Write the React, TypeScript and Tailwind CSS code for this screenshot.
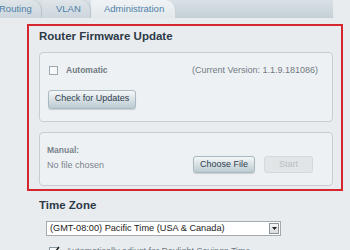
const font = { fontFamily: '"Liberation Sans", Arial, sans-serif' };

function Tab({ label, active, className }: { label: string; active?: boolean; className: string }) {
  return (
    <div
      className={
        "relative flex h-full items-center rounded-tr-[10px] border-r text-[9.5px] " +
        (active
          ? "bg-gradient-to-b from-[#f0f3f5] to-[#e2e8eb] border-[#c9d2d8] text-[#4f7fa8] "
          : "bg-gradient-to-b from-[#dfe5e9] to-[#ccd6dc] border-[#b9c5cc] text-[#4f7fa8] ") +
        className
      }
    >
      {label}
    </div>
  );
}

export default function App() {
  return (
    <div style={font} className="w-[350px] h-[250px] overflow-hidden bg-[#e9ecef] text-[#2f3b47]">
      {/* tab bar */}
      <div className="flex h-[18px] w-[333px] items-end bg-gradient-to-b from-[#dae1e6] to-[#c4cfd6]">
        <Tab label="Routing" className="w-[43px] pl-0 -ml-[1px] pt-[1px]" />
        <Tab label="VLAN" className="w-[49px] pl-[14px] pt-[1px]" />
        <Tab label="Administration" active className="w-[85px] pl-[13px] h-[17px]" />
      </div>

      {/* firmware box */}
      <div className="ml-[27px] mt-[6px] h-[167px] w-[316px] border-2 border-[#d5272f] pl-[10px] pr-[8px]">
        <div className="pt-[3px] text-[11.5px] font-bold leading-[14px] text-[#2d3a48]">Router Firmware Update</div>

        <div className="mt-[9px] h-[70px] rounded-[4px] border border-[#c7cdd2] bg-[#eef1f3] px-[9px] pt-[11px]">
          <div className="flex items-center">
            <span className="h-[9px] w-[9px] border border-[#9aa9b2] bg-[#f7f9fa]" />
            <span className="ml-[8px] text-[8.5px] font-bold text-[#6f7a84]">Automatic</span>
            <span className="ml-auto mr-[5px] text-[9px] text-[#6f7a84]">(Current Version: 1.1.9.181086)</span>
          </div>
          <button className="mt-[12px] h-[19px] w-[88px] -ml-[1px] rounded-[3px] border border-[#a9b9c1] bg-gradient-to-b from-[#f4f7f8] to-[#bccbd2] text-[9px] text-[#2f3e4c] shadow-[0_1px_1px_rgba(0,0,0,0.15)]">
            Check for Updates
          </button>
        </div>

        <div className="mt-[10px] flex h-[54px] items-start rounded-[4px] border border-[#c7cdd2] bg-[#eef1f3] pl-[7px] pr-[19px] pt-[11px]">
          <div className="flex flex-col">
            <span className="text-[8.5px] font-bold leading-[12px] text-[#7a848d]">Manual:</span>
            <span className="mt-[3px] text-[9px] leading-[12px] text-[#7a848d]">No file chosen</span>
          </div>
          <div className="ml-auto mt-[12px] flex gap-[9px]">
            <button className="h-[17px] w-[62px] rounded-[3px] border border-[#a9b9c1] bg-gradient-to-b from-[#f4f7f8] to-[#bccbd2] text-[9px] text-[#2f3e4c] shadow-[0_1px_1px_rgba(0,0,0,0.15)]">
              Choose File
            </button>
            <button className="h-[17px] w-[49px] rounded-[3px] border border-[#d3d9dc] bg-[#e1e5e7] text-[9px] text-[#b9c0c4]">
              Start
            </button>
          </div>
        </div>
      </div>

      {/* time zone */}
      <div className="ml-[39px] mt-[7px] text-[11.5px] font-bold leading-[14px] text-[#2d3a48]">Time Zone</div>
      <div className="ml-[46px] mt-[9px] flex h-[15px] w-[235px] items-center border border-[#a3abb1] bg-white">
        <span className="pl-[3px] text-[9.2px] text-[#222]">(GMT-08:00) Pacific Time (USA &amp; Canada)</span>
        <span className="ml-auto mr-[1px] flex h-[11px] w-[10px] items-center justify-center border border-[#8d959b] bg-gradient-to-b from-[#f5f5f5] to-[#d9dcde]">
          <svg width="5" height="3" viewBox="0 0 5 3">
            <path d="M0 0h5L2.5 3z" fill="#222" />
          </svg>
        </span>
      </div>
      <div className="ml-[49px] mt-[9px] flex items-center">
        <span className="relative h-[9px] w-[9px] border border-[#8a98a1] bg-[#f7f9fa]">
          <svg className="absolute -top-[2px] left-0" width="10" height="10" viewBox="0 0 10 10">
            <path d="M1 5l2.5 3L9 1" stroke="#222" strokeWidth="1.5" fill="none" />
          </svg>
        </span>
        <span className="ml-[8px] text-[9px] text-[#6f7a84]">Automatically adjust for Daylight Savings Time</span>
      </div>
    </div>
  );
}
